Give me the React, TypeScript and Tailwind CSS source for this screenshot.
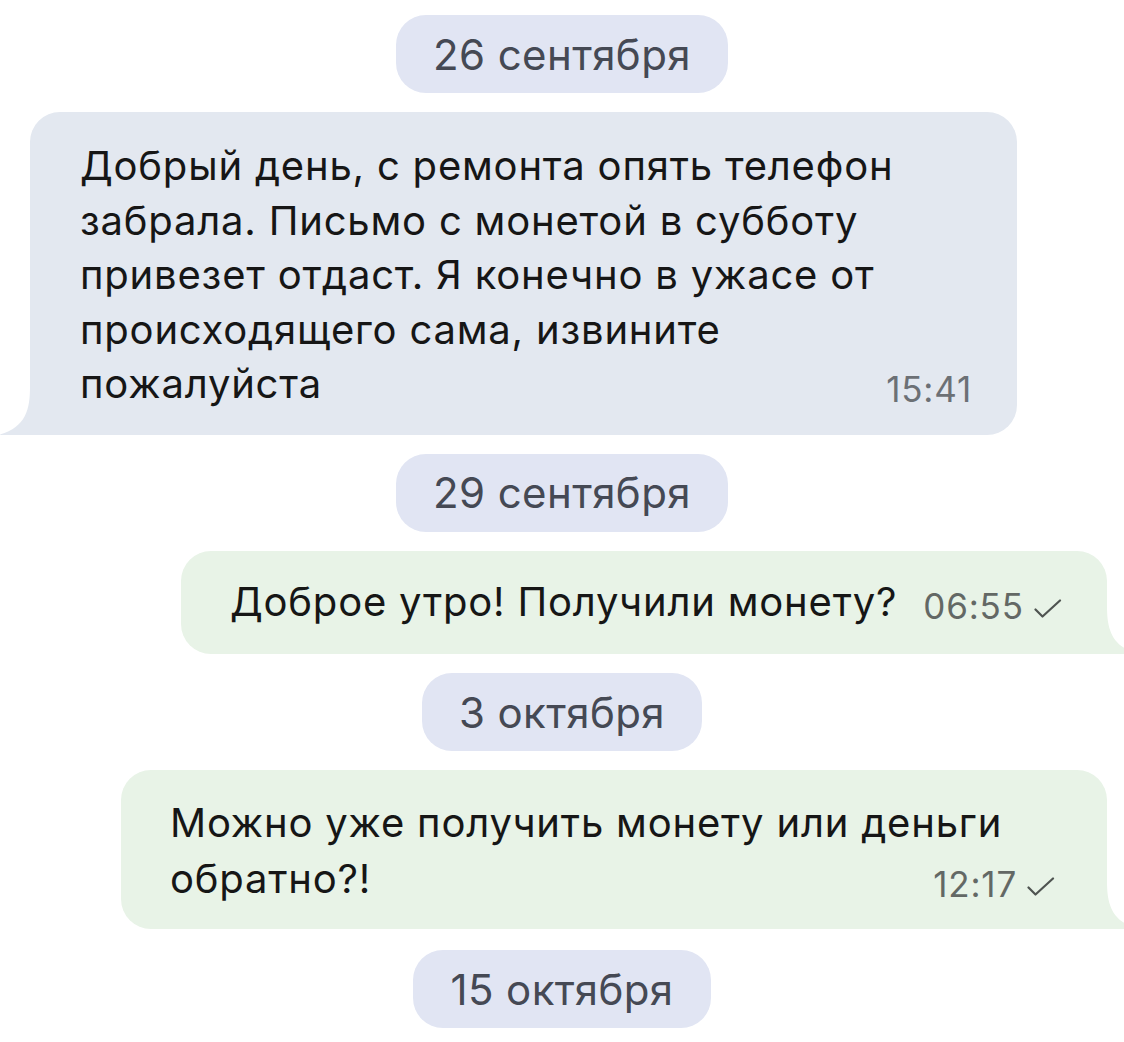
import React from "react";

const font = { fontFamily: "Inter, 'Noto Sans', sans-serif" };

function DatePill({ children }: { children: React.ReactNode }) {
  return (
    <div className="self-center flex h-[78px] items-center whitespace-nowrap rounded-[30px] bg-[#e1e5f3] px-[37px] text-[42px] text-[#454954] tracking-[0.4px]">
      {children}
    </div>
  );
}

function Check() {
  return (
    <svg width="28" height="20" viewBox="0 0 28 20" className="ml-[10px] mb-[10px] shrink-0">
      <path d="M1.5 10.5 L8.5 17.5 L26 1.5" fill="none" stroke="#4f5451" strokeWidth="2.2" strokeLinecap="round" strokeLinejoin="round" />
    </svg>
  );
}

function TailLeft({ color }: { color: string }) {
  return (
    <svg width="40" height="48" viewBox="0 0 40 48" className="absolute bottom-0 left-[-30px]">
      <path d="M30 0 C30 22 26 40 0 47.5 Q0 48 2 48 L40 48 L40 0 Z" fill={color} />
    </svg>
  );
}

function TailRight({ color }: { color: string }) {
  return (
    <svg width="40" height="48" viewBox="0 0 40 48" className="absolute bottom-0 right-[-30px]">
      <path d="M10 0 C10 22 14 40 40 47.5 Q40 48 38 48 L0 48 L0 0 Z" fill={color} />
    </svg>
  );
}

const timeCls = "shrink-0 whitespace-nowrap text-[35px] leading-[40px] tracking-[0.8px] mb-[3px]";

export default function App() {
  return (
    <div className="w-[1124px] h-[1042px] overflow-hidden bg-white" style={font}>
      <div className="flex flex-col gap-[19px] pt-[15px]">
        <DatePill>26 сентября</DatePill>

        <div className="relative ml-[30px] w-[987px] rounded-[30px] rounded-bl-none bg-[#e3e8f0] pl-[50px] pr-[45px] pt-[27px] pb-[23px] text-[40px] leading-[54.5px] text-[#161616] tracking-[0.8px] whitespace-nowrap">
          <div>Добрый день, с ремонта опять телефон</div>
          <div>забрала. Письмо с монетой в субботу</div>
          <div>привезет отдаст. Я конечно в ужасе от</div>
          <div>происходящего сама, извините</div>
          <div className="flex items-end justify-between">
            <span>пожалуйста</span>
            <span className={timeCls + " text-[#6c7075]"}>15:41</span>
          </div>
          <TailLeft color="#e3e8f0" />
        </div>

        <DatePill>29 сентября</DatePill>

        <div className="relative self-end mr-[17px] w-[926px] rounded-[30px] rounded-br-none bg-[#e8f3e7] pl-[49px] pr-[40px] pt-[24px] pb-[25px] text-[40px] leading-[54.5px] text-[#161616] tracking-[0.8px] whitespace-nowrap">
          <div className="flex items-end">
            <span className="shrink-0">Доброе утро! Получили монету?</span>
            <span className={"ml-[26px] " + timeCls + " text-[#636865]"}>06:55</span>
            <Check />
          </div>
          <TailRight color="#e8f3e7" />
        </div>

        <DatePill>3 октября</DatePill>

        <div className="relative self-end mr-[17px] w-[986px] rounded-[30px] rounded-br-none bg-[#e8f3e7] pl-[49px] pr-[52px] pt-[25px] pb-[22px] text-[40px] leading-[56px] text-[#161616] tracking-[0.8px] whitespace-nowrap">
          <div>Можно уже получить монету или деньги</div>
          <div className="flex items-end justify-between">
            <span>обратно?!</span>
            <span className="flex items-end">
              <span className={timeCls + " text-[#636865]"}>12:17</span>
              <Check />
            </span>
          </div>
          <TailRight color="#e8f3e7" />
        </div>

        <div className="mt-[2px] self-center">
          <DatePill>15 октября</DatePill>
        </div>
      </div>
    </div>
  );
}
